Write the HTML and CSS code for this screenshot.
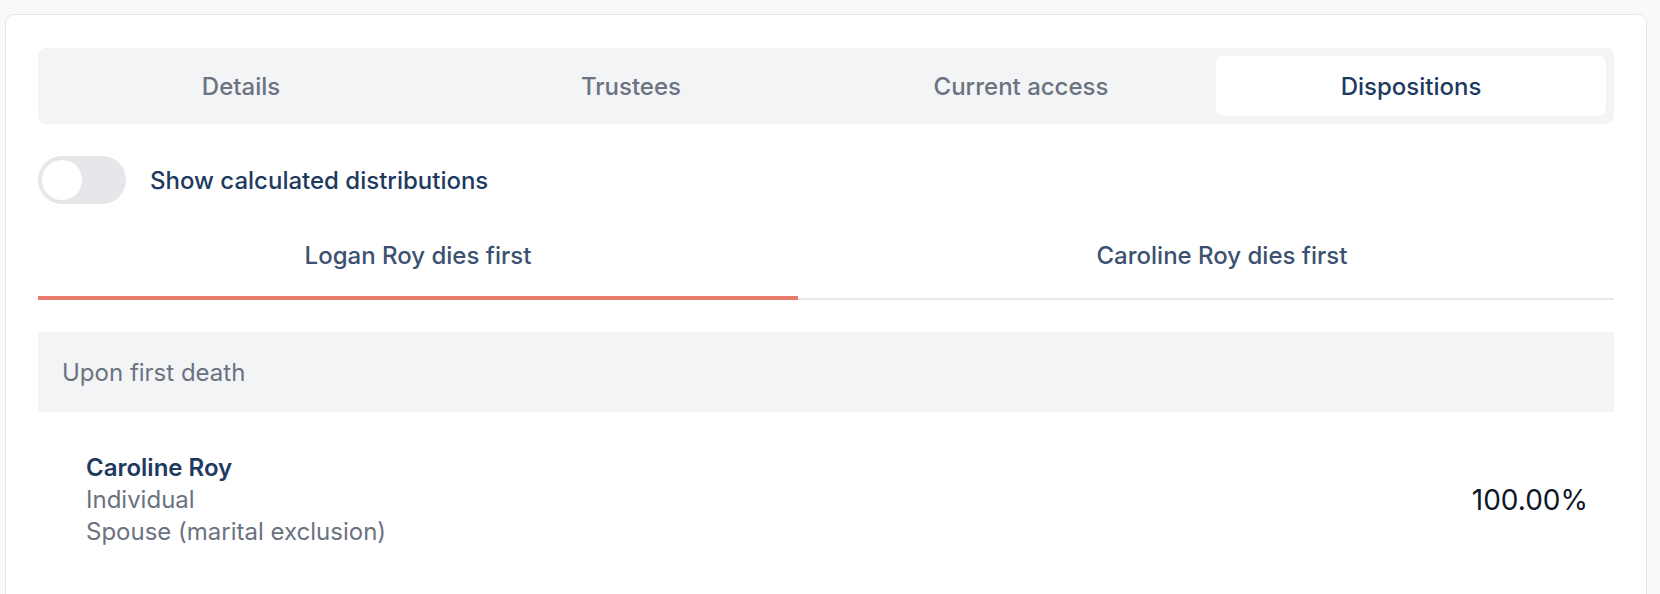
FILE: index.html
```html
<!DOCTYPE html>
<html lang="en">
<head>
<meta charset="utf-8">
<title>Dispositions</title>
<link rel="stylesheet" href="styles.css">
</head>
<body>
<div class="card">
  <div class="seg">
    <div class="seg-item">Details</div>
    <div class="seg-item">Trustees</div>
    <div class="seg-item">Current access</div>
    <div class="seg-item seg-active">Dispositions</div>
  </div>

  <div class="toggle-row">
    <span class="toggle"><span class="knob"></span></span>
    <span class="toggle-label">Show calculated distributions</span>
  </div>

  <div class="tabs">
    <div class="tab tab-active">Logan Roy dies first</div>
    <div class="tab">Caroline Roy dies first</div>
  </div>

  <div class="section-head">Upon first death</div>

  <div class="row">
    <div class="who">
      <div class="name">Caroline Roy</div>
      <div class="meta">Individual</div>
      <div class="meta">Spouse (marital exclusion)</div>
    </div>
    <div class="pct">100.00%</div>
  </div>
</div>
</body>
</html>
```

FILE: styles.css
```css
* { box-sizing: border-box; }
html, body { margin: 0; padding: 0; }
body {
  background: #f8f9fb;
  font-family: Inter, "Noto Sans", sans-serif;
  padding-top: 14px;
  height: 594px;
  overflow: hidden;
}
.card {
  margin: 0 13px 0 5px;
  background: #fff;
  border: 1px solid #e5e7eb;
  border-radius: 9px;
  padding: 33px 32px 0 32px;
  min-height: 600px;
}
.seg {
  display: grid;
  grid-template-columns: repeat(4, 1fr);
  background: #f3f4f6;
  border-radius: 8px;
  padding: 8px;
}
.seg-item {
  height: 60px;
  display: flex;
  align-items: center;
  justify-content: center;
  font-size: 24px;
  font-weight: 500;
  color: #6b7280;
  border-radius: 8px;
}
.seg-active {
  background: #fff;
  color: #1e3a5f;
}
.toggle-row {
  display: flex;
  align-items: center;
  gap: 24px;
  margin-top: 32px;
}
.toggle {
  width: 88px;
  height: 48px;
  border-radius: 24px;
  background: #e5e7eb;
  padding: 4px;
  display: flex;
}
.knob {
  width: 40px;
  height: 40px;
  border-radius: 50%;
  background: #fff;
}
.toggle-label {
  font-size: 24px;
  font-weight: 500;
  color: #1e3a5f;
}
.tabs {
  display: flex;
  gap: 32px;
  margin-top: 16px;
  background: linear-gradient(#e5e7eb, #e5e7eb) left bottom / 100% 2px no-repeat;
}
.tab {
  flex: 1 1 auto;
  text-align: center;
  font-size: 24px;
  font-weight: 500;
  line-height: 32px;
  padding: 20px 0 28px;
  color: #3b5170;
}
.tab-active {
  box-shadow: inset 0 -4px 0 #e97a6e;
}
.section-head {
  margin-top: 32px;
  height: 80px;
  background: #f3f4f6;
  display: flex;
  align-items: center;
  padding: 0 24px;
  font-size: 24px;
  color: #6b7280;
}
.row {
  display: flex;
  align-items: center;
  justify-content: space-between;
  padding: 40px 26px 40px 48px;
}
.who {
  font-size: 24px;
  line-height: 32px;
}
.name {
  font-weight: 600;
  color: #1e3a5f;
}
.meta {
  color: #6b7280;
}
.pct {
  font-size: 28px;
  color: #111827;
}
```
